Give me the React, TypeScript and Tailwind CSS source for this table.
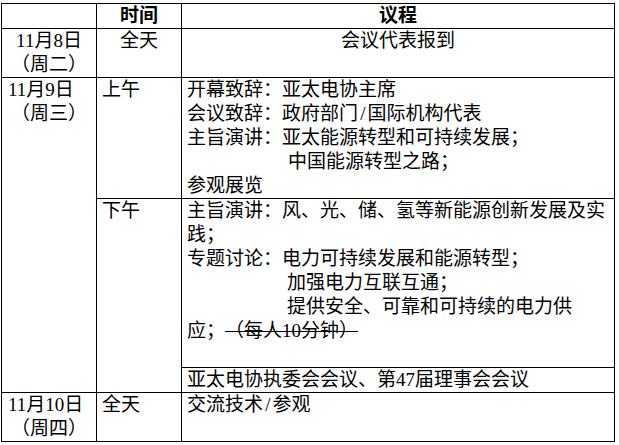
import React from "react";

const Slash = () => <span className="inline-block w-[9.5px] text-center">/</span>;

export default function App() {
  const cell = "bg-white text-[19px] leading-[24px] text-black";
  return (
    <div className="bg-white w-[619px] h-[445px] pt-[3px] pl-px font-['Liberation_Serif','Noto_Sans_CJK_SC',serif] [text-spacing-trim:space-all]">
      <div className="grid w-fit grid-cols-[94px_84px_432px] grid-rows-[24px_48px_120px_168px_24px_48px] gap-px bg-black p-px">
        {/* header */}
        <div className={`${cell} col-start-1 row-start-1`} />
        <div className={`${cell} col-start-2 row-start-1 text-center font-bold`}>时间</div>
        <div className={`${cell} col-start-3 row-start-1 text-center font-bold`}>议程</div>

        {/* 11月8日 */}
        <div className={`${cell} col-start-1 row-start-2 text-center`}>
          <div>11月8日</div>
          <div>（周二）</div>
        </div>
        <div className={`${cell} col-start-2 row-start-2 text-center`}>全天</div>
        <div className={`${cell} col-start-3 row-start-2 text-center`}>会议代表报到</div>

        {/* 11月9日 */}
        <div className={`${cell} col-start-1 row-start-3 row-span-3`}>
          <div className="pl-[6px]">11月9日</div>
          <div className="text-center">（周三）</div>
        </div>
        <div className={`${cell} col-start-2 row-start-3 pl-[5px]`}>上午</div>
        <div className={`${cell} col-start-3 row-start-3 pl-[5px] whitespace-nowrap`}>
          <div>开幕致辞：亚太电协主席</div>
          <div>
            会议致辞：政府部门<Slash />国际机构代表
          </div>
          <div>主旨演讲：亚太能源转型和可持续发展；</div>
          <div className="pl-[101px]">中国能源转型之路；</div>
          <div>参观展览</div>
        </div>
        <div className={`${cell} col-start-2 row-start-4 row-span-2 pl-[5px]`}>下午</div>
        <div className={`${cell} col-start-3 row-start-4 pl-[5px] whitespace-nowrap`}>
          <div>主旨演讲：风、光、储、氢等新能源创新发展及实</div>
          <div>践；</div>
          <div>专题讨论：电力可持续发展和能源转型；</div>
          <div className="pl-[100px]">加强电力互联互通；</div>
          <div className="pl-[100px]">提供安全、可靠和可持续的电力供</div>
          <div>
            应；
            <span className="relative inline-block">
              （每人10分钟）
              <span className="absolute left-0 right-0 top-[12px] h-px bg-black" />
            </span>
          </div>
        </div>
        <div className={`${cell} col-start-3 row-start-5 pl-[5px] whitespace-nowrap`}>
          亚太电协执委会会议、第47届理事会会议
        </div>

        {/* 11月10日 */}
        <div className={`${cell} col-start-1 row-start-6`}>
          <div className="pl-[6px]">11月10日</div>
          <div className="text-center">（周四）</div>
        </div>
        <div className={`${cell} col-start-2 row-start-6 pl-[5px]`}>全天</div>
        <div className={`${cell} col-start-3 row-start-6 pl-[5px]`}>
          交流技术<Slash />参观
        </div>
      </div>
    </div>
  );
}
